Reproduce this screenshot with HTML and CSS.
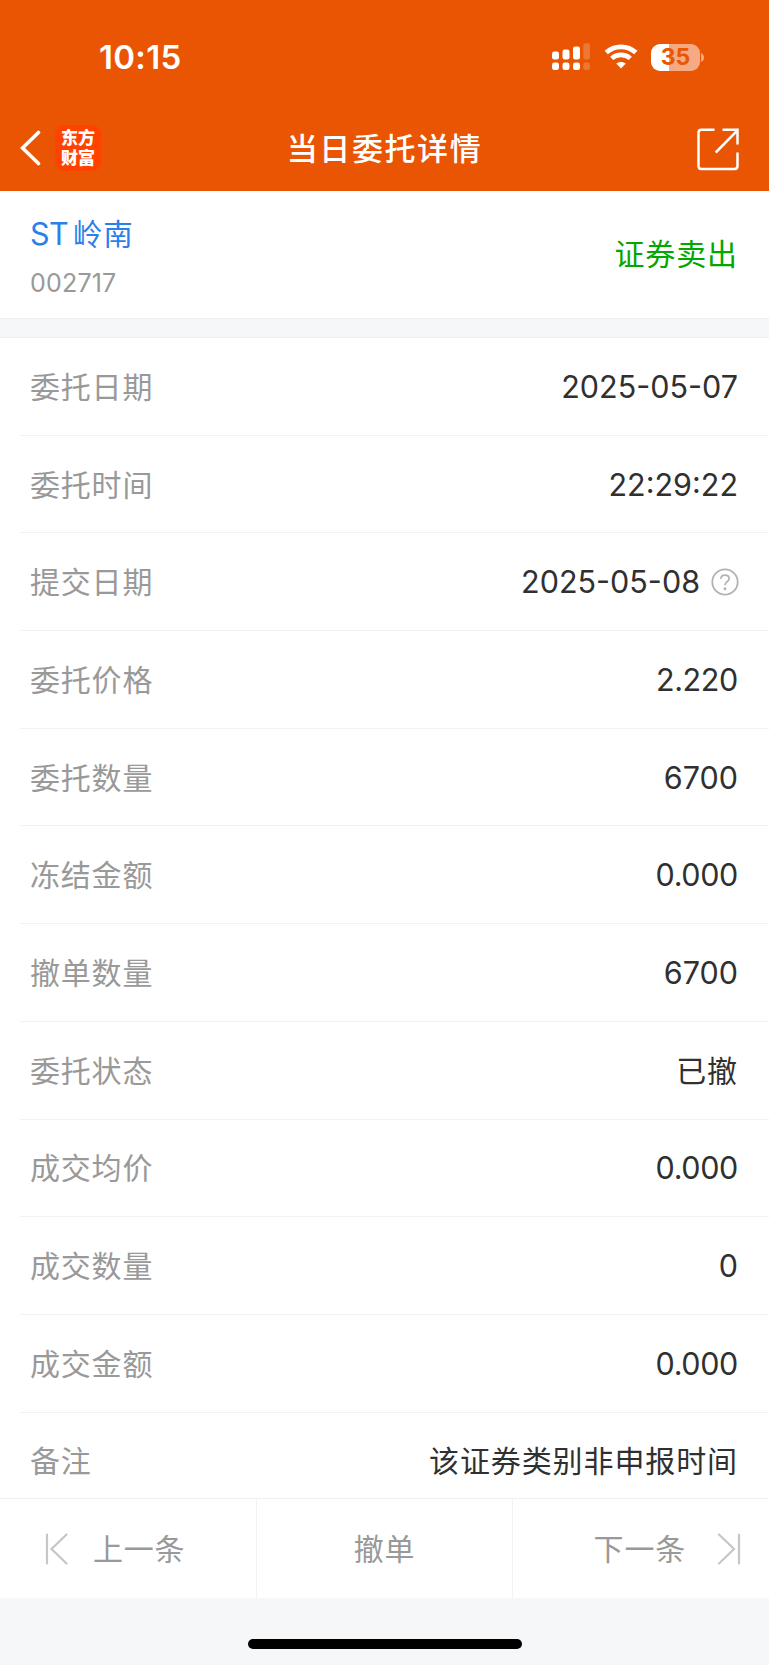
FILE: index.html
```html
<!DOCTYPE html>
<html lang="zh-CN">
<head>
<meta charset="utf-8">
<title>当日委托详情</title>
<link rel="stylesheet" href="styles.css">
</head>
<body>
<div class="screen">
  <header class="header">
    <div class="status">
      <span class="clock">10:15</span>
      <div class="status-icons">
        <svg class="signal" width="38" height="28" viewBox="0 0 38 28" fill="#fff">
          <rect x="0" y="8.5" width="7" height="8" rx="2.2"/><rect x="10.5" y="6.5" width="7" height="10" rx="2.2"/><rect x="21" y="3.5" width="7" height="13" rx="2.2"/><rect x="31.3" y="0.3" width="6.7" height="16.2" rx="2.2" opacity=".2"/>
          <rect x="0" y="19.5" width="7" height="7.6" rx="2.4"/><rect x="10.5" y="19.5" width="7" height="7.6" rx="2.4"/><rect x="21" y="19.5" width="7" height="7.6" rx="2.4"/><rect x="31.3" y="19.5" width="6.7" height="7.6" rx="2.4" opacity=".2"/>
        </svg>
        <svg class="wifi" width="34" height="26" viewBox="0 0 34 26">
          <path d="M2.2 8.6C10.5 .9 23.5 .9 31.8 8.6" fill="none" stroke="#fff" stroke-width="4.8"/>
          <path d="M7.7 14.4C12.9 9.7 21.1 9.7 26.3 14.4" fill="none" stroke="#fff" stroke-width="4.6"/>
          <path d="M12.2 19.6C14.9 17.3 19.1 17.3 21.8 19.6L17 24.6Z" fill="#fff"/>
        </svg>
        <div class="battery"><span class="battery-body">35</span><svg width="3" height="9" viewBox="0 0 3 9"><path d="M0 0Q3 1.5 3 4.5T0 9Z" fill="#fff" opacity=".5"/></svg></div>
      </div>
    </div>
    <nav class="nav">
      <div class="nav-left">
        <svg width="22" height="36" viewBox="0 0 22 36"><path d="M18.5 2.5L2.5 18L18.5 33.5" fill="none" stroke="#fff" stroke-width="3.6" stroke-linecap="round"/></svg>
        <div class="logo"><span>东方</span><span>财富</span></div>
      </div>
      <h1 class="title">当日委托详情</h1>
      <svg class="share" width="43" height="43" viewBox="0 0 43 43" fill="none" stroke="#fff" stroke-width="2.5"><path d="M17.5 1.8H4.5Q1.5 1.8 1.5 4.8V38Q1.5 41 4.5 41H37.5Q40.5 41 40.5 38V24.5M25.5 1.8H40.5V16.5M18.7 24.5L40 2.8"/></svg>
    </nav>
  </header>
  <section class="stock">
    <div class="stock-info">
      <div class="stock-name"><span class="latin">ST</span>岭南</div>
      <div class="stock-code">002717</div>
    </div>
    <div class="side">证券卖出</div>
  </section>
  <main class="rows">
    <div class="row"><span class="label">委托日期</span><span class="value num">2025-05-07</span></div>
    <div class="row"><span class="label">委托时间</span><span class="value num time">22:29:22</span></div>
    <div class="row"><span class="label">提交日期</span><span class="value num with-help">2025-05-08</span><svg width="28" height="28" viewBox="0 0 28 28" fill="none" stroke="#b3b3b3"><circle cx="14" cy="14" r="12.7" stroke-width="1.8"/><path d="M9.8 10.8C10 8.5 11.7 7.2 14 7.2C16.4 7.2 18.1 8.7 18.1 10.7C18.1 13.5 14 13.9 14 17.3" stroke-width="1.8"/><circle cx="14" cy="20.8" r="1.5" fill="#b3b3b3" stroke="none"/></svg></div>
    <div class="row"><span class="label">委托价格</span><span class="value num decimal">2.220</span></div>
    <div class="row"><span class="label">委托数量</span><span class="value num">6700</span></div>
    <div class="row"><span class="label">冻结金额</span><span class="value num decimal">0.000</span></div>
    <div class="row"><span class="label">撤单数量</span><span class="value num">6700</span></div>
    <div class="row"><span class="label">委托状态</span><span class="value cjk">已撤</span></div>
    <div class="row"><span class="label">成交均价</span><span class="value num decimal">0.000</span></div>
    <div class="row"><span class="label">成交数量</span><span class="value num">0</span></div>
    <div class="row"><span class="label">成交金额</span><span class="value num decimal">0.000</span></div>
    <div class="row"><span class="label">备注</span><span class="value cjk">该证券类别非申报时间</span></div>
  </main>
  <footer class="actions">
    <div class="action prev"><svg width="24" height="32" viewBox="0 0 24 32" fill="none" stroke="#c6c6c6" stroke-width="2.2" stroke-linecap="round"><path d="M2 1.5V30.5M21.5 1.5L6.5 16L21.5 30.5"/></svg><span class="action-text">上一条</span></div>
    <div class="action"><span class="action-text">撤单</span></div>
    <div class="action next"><span class="action-text">下一条</span><svg width="24" height="32" viewBox="0 0 24 32" fill="none" stroke="#c6c6c6" stroke-width="2.2" stroke-linecap="round"><path d="M22 1.5V30.5M2 1.5L17 16L2 30.5"/></svg></div>
  </footer>
  <div class="home"><div class="home-bar"></div></div>
</div>
</body>
</html>
```
FILE: styles.css
```css
* { box-sizing: border-box; }
body { margin: 0; font-family: "Noto Sans CJK SC", sans-serif; }
svg { display: block; flex: none; }
.screen { width: 769px; height: 1665px; display: flex; flex-direction: column; overflow: hidden; background: #f6f7f9; }
.header { height: 191px; flex: none; background: #ea5504; color: #fff; }
.status { height: 107px; display: flex; justify-content: space-between; padding: 39px 65px 0 99px; }
.clock { font: 600 33px/37px Inter, sans-serif; letter-spacing: 0.3px; }
.status-icons { display: flex; align-items: flex-start; padding-top: 5px; }
.signal { margin: -1px 14px 0 0; }
.wifi { margin-right: 13px; }
.battery { display: flex; align-items: center; gap: 1px; }
.battery-body { width: 49px; height: 27px; border-radius: 9px; background: linear-gradient(90deg, #fff 36%, #f5aa81 36%); color: #ea5504; font: 700 23px/27px Inter, sans-serif; text-align: center; }
.nav { height: 84px; display: grid; grid-template-columns: 1fr auto 1fr; align-items: center; padding: 0 29px 2px 20px; }
.nav-left { display: flex; align-items: center; gap: 13px; }
.logo { width: 46px; height: 46px; border-radius: 9px; background: #ff4200; display: flex; flex-direction: column; align-items: center; padding-top: 4px; font: 900 17px/20px "Liberation Sans", "Noto Sans CJK SC", sans-serif; }
.title { margin: 0 0 3px 9px; font-weight: 500; font-size: 31px; line-height: 44px; letter-spacing: 1.6px; }
.share { justify-self: end; margin-top: 2px; }
.stock { height: 128px; flex: none; background: #fff; display: flex; justify-content: space-between; align-items: center; padding: 0 31px 0 30px; border-bottom: 1px solid #edeff2; }
.stock-info { padding-top: 3px; }
.stock-name { color: #2a7fe8; font-size: 29.5px; line-height: 44px; letter-spacing: .8px; }
.latin { font-family: Inter, sans-serif; font-size: 30.5px; letter-spacing: -.6px; margin-right: 5px; }
.stock-code { margin-top: 7px; color: #999; font: 25px/40px Inter, sans-serif; letter-spacing: .2px; }
.side { color: #00a800; font-size: 30px; letter-spacing: .9px; padding-bottom: 5px; }
.rows { margin-top: 18px; height: 1161px; flex: none; background: #fff; overflow: hidden; border-top: 1px solid #edeff2; padding-left: 20px; }
.row { height: 97.7px; display: flex; align-items: center; padding: 0 31px 0 10px; border-bottom: 1px solid #f2f2f2; }
.label { flex: 1; color: #999; font-size: 30px; letter-spacing: .8px; padding-bottom: 3px; }
.value { color: #303030; font-size: 30px; letter-spacing: .9px; }
.cjk { padding-bottom: 3px; }
.num { font-family: Inter, sans-serif; font-size: 30.5px; letter-spacing: 0; }
.decimal { letter-spacing: -.35px; }
.with-help { margin-right: 11px; }
.row svg { margin-right: -1px; }
.actions { height: 100px; flex: none; display: grid; grid-template-columns: 257px 256px 256px; background: #fff; border-top: 1px solid #f0f0f0; color: #999; font-size: 30px; letter-spacing: .8px; }
.action { display: flex; align-items: center; justify-content: center; border-right: 1px solid #f2f2f2; }
.action:last-child { border-right: 0; }
.action-text { padding-bottom: 4px; }
.prev { justify-content: flex-start; padding-left: 45px; gap: 24px; }
.next { justify-content: flex-end; padding-right: 28px; gap: 31px; }
.home { flex: 1; display: flex; justify-content: center; padding-top: 41px; }
.home-bar { width: 274px; height: 10px; border-radius: 5px; background: #000; }
```
